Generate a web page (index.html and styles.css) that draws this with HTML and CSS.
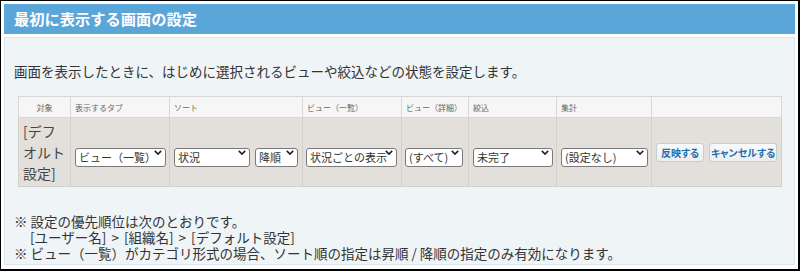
FILE: index.html
```html
<!DOCTYPE html>
<html lang="ja">
<head>
<meta charset="utf-8">
<title>最初に表示する画面の設定</title>
<link rel="stylesheet" href="styles.css">
</head>
<body>
<div class="frame">
  <h1 class="title">最初に表示する画面の設定</h1>
  <div class="panel">
    <p class="desc">画面を表示したときに、はじめに選択されるビューや絞込などの状態を設定します。</p>
    <table class="grid">
      <colgroup>
        <col class="c1"><col class="c2"><col class="c3"><col class="c4"><col class="c5"><col class="c6"><col class="c7"><col class="c8">
      </colgroup>
      <thead>
        <tr>
          <th class="center">対象</th>
          <th>表示するタブ</th>
          <th>ソート</th>
          <th>ビュー（一覧）</th>
          <th>ビュー（詳細）</th>
          <th>絞込</th>
          <th>集計</th>
          <th></th>
        </tr>
      </thead>
      <tbody>
        <tr>
          <td class="target">[デフ<br>オルト<br>設定]</td>
          <td><div class="cell"><span class="sel w91"><select><option>ビュー（一覧）</option></select><svg class="chev" viewBox="0 0 10 6"><path d="M1 1 L5 5 L9 1"/></svg></span></div></td>
          <td><div class="cell"><span class="sel w76"><select><option>状況</option></select><svg class="chev" viewBox="0 0 10 6"><path d="M1 1 L5 5 L9 1"/></svg></span><span class="sel w43"><select><option>降順</option></select><svg class="chev" viewBox="0 0 10 6"><path d="M1 1 L5 5 L9 1"/></svg></span></div></td>
          <td><div class="cell tight"><span class="sel w91"><select><option>状況ごとの表示</option></select><svg class="chev" viewBox="0 0 10 6"><path d="M1 1 L5 5 L9 1"/></svg></span></div></td>
          <td><div class="cell tight"><span class="sel w58"><select><option>(すべて)</option></select><svg class="chev" viewBox="0 0 10 6"><path d="M1 1 L5 5 L9 1"/></svg></span></div></td>
          <td><div class="cell"><span class="sel w80"><select><option>未完了</option></select><svg class="chev" viewBox="0 0 10 6"><path d="M1 1 L5 5 L9 1"/></svg></span></div></td>
          <td><div class="cell"><span class="sel w87"><select><option>(設定なし)</option></select><svg class="chev" viewBox="0 0 10 6"><path d="M1 1 L5 5 L9 1"/></svg></span></div></td>
          <td><div class="cell"><button class="btn b48">反映する</button><button class="btn b68">キャンセルする</button></div></td>
        </tr>
      </tbody>
    </table>
    <div class="notes">
      <p>※ 設定の優先順位は次のとおりです。</p>
      <p class="indent">[ユーザー名] &gt; [組織名] &gt; [デフォルト設定]</p>
      <p>※ ビュー（一覧）がカテゴリ形式の場合、ソート順の指定は昇順 / 降順の指定のみ有効になります。</p>
    </div>
  </div>
</div>
</body>
</html>
```
FILE: styles.css
```css
html, body {
  margin: 0;
  padding: 0;
  background: #fff;
}
body {
  font-family: "Noto Sans CJK JP", "Noto Sans", sans-serif;
  color: #333;
}
.frame {
  width: 800px;
  height: 271px;
  box-sizing: border-box;
  border-style: solid;
  border-color: #000;
  border-width: 1px 2px 2px 1px;
  padding: 3px 3px 4px 3px;
  display: flex;
  flex-direction: column;
  gap: 3px;
  background: #fff;
}
.title {
  margin: 0;
  height: 30px;
  flex: none;
  background: #5ba6d9;
  color: #fff;
  font-size: 15.25px;
  font-weight: bold;
  padding-left: 10px;
  display: flex;
  align-items: center;
  line-height: 1;
}
.panel {
  flex: 1;
  background: #eff4f7;
  border: 1px solid #dde6ec;
  padding: 0 9px;
}
.desc {
  margin: 24px 0 0 0;
  font-size: 13.5px;
  line-height: 18px;
  color: #333;
}
.grid {
  margin: 16px 0 0 4px;
  border-collapse: collapse;
  table-layout: fixed;
  width: 763px;
  border: 1px solid #d4d4d4;
}
.c1 { width: 52px; }
.c2 { width: 99px; }
.c3 { width: 133px; }
.c4 { width: 99px; }
.c5 { width: 67px; }
.c6 { width: 88px; }
.c7 { width: 95px; }
.c8 { width: 130px; }
.grid th {
  height: 20px;
  background: #f6f6f6;
  border: 1px solid #d8d8d8;
  font-size: 8px;
  font-weight: normal;
  color: #666;
  text-align: left;
  padding: 0 4px;
  vertical-align: middle;
  white-space: nowrap;
}
.grid th.center {
  text-align: center;
}
.grid td {
  background: #e3e0db;
  border: 1px solid #d4d1cc;
  height: 68px;
  padding: 0;
  vertical-align: middle;
}
.grid td.target {
  font-size: 14px;
  line-height: 21px;
  color: #444;
  padding: 0 4px;
}
.cell {
  display: flex;
  align-items: center;
  gap: 5px;
  padding: 0 4px;
}
.cell.tight {
  padding: 0 3px;
}
.sel {
  position: relative;
  display: inline-block;
  height: 19px;
  flex: none;
}
.sel select {
  appearance: none;
  -webkit-appearance: none;
  width: 100%;
  height: 19px;
  box-sizing: border-box;
  border: 1px solid #7a7a7a;
  border-radius: 3px;
  background: #fff;
  font-family: "Noto Sans CJK JP", sans-serif;
  font-size: 11px;
  color: #333;
  padding: 0 8px 0 3px;
  margin: 0;
  line-height: 17px;
}
.chev {
  position: absolute;
  right: 4px;
  top: 7px;
  width: 8px;
  height: 5px;
  fill: none;
  stroke: #222;
  stroke-width: 2;
  pointer-events: none;
}
.w91 { width: 91px; }
.w76 { width: 76px; }
.w43 { width: 43px; }
.w58 { width: 58px; }
.w80 { width: 80px; }
.w87 { width: 87px; }
.btn {
  height: 19px;
  box-sizing: border-box;
  border: 1px solid #c9ccd0;
  border-radius: 3px;
  background: linear-gradient(#f8f9fa, #eceef0);
  color: #1f6db3;
  font-family: "Noto Sans CJK JP", sans-serif;
  font-size: 10px;
  font-weight: bold;
  font-feature-settings: "palt";
  white-space: nowrap;
  padding: 0;
  margin: 0;
  line-height: 17px;
  flex: none;
}
.b48 { width: 48px; }
.b68 { width: 68px; }
.notes {
  margin-top: 26px;
  font-size: 13.5px;
  line-height: 16px;
  color: #333;
}
.notes p {
  margin: 0;
}
.notes .indent {
  padding-left: 16px;
  word-spacing: 2px;
}
```
